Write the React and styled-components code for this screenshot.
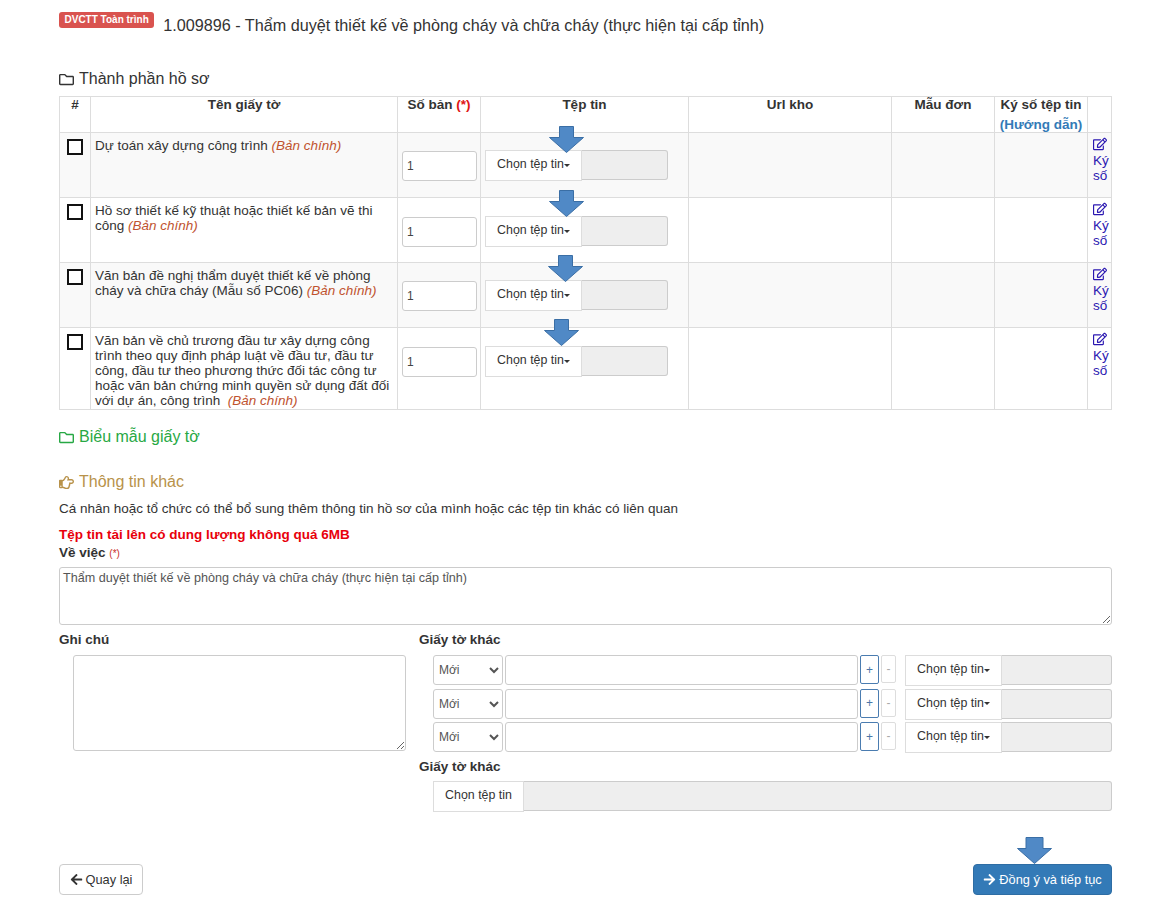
import React from 'react';
import styled, { createGlobalStyle } from 'styled-components';
import { FaRegFolder, FaRegEdit, FaRegHandPointRight, FaArrowLeft, FaArrowRight } from 'react-icons/fa';

const GlobalStyle = createGlobalStyle`
  html, body { margin: 0; padding: 0; background: #fff; }
  body {
    font-family: "Liberation Sans", Arial, sans-serif;
    font-size: 13.5px;
    line-height: 20px;
    color: #333;
  }
  * { box-sizing: border-box; }
`;

const Page = styled.div`
  width: 1176px;
  height: 917px;
  padding: 12px 64px 0 59px;
  overflow: hidden;
`;

const TitleRow = styled.div`
  display: flex;
  align-items: flex-start;
  height: 57px;
`;

const Badge = styled.span`
  background: #d9534f;
  color: #fff;
  font-size: 10px;
  font-weight: bold;
  line-height: 16px;
  height: 16px;
  padding: 0 5.5px;
  border-radius: 3px;
  margin-right: 9px;
`;

const Title = styled.span`
  font-size: 16.2px;
  line-height: 26px;
`;

const SectionTitle = styled.div`
  display: flex;
  align-items: center;
  gap: 5px;
  font-size: 16px;
  line-height: 20px;
  height: 20px;
  color: ${(p) => p.$color || '#333'};
  margin-top: ${(p) => p.$top || 0}px;
  svg { font-size: 15px; }
`;

const Table = styled.table`
  width: 1052px;
  table-layout: fixed;
  border-collapse: collapse;
  margin-top: 7px;
`;

const Th = styled.th`
  border: 1px solid #ddd;
  padding: 0 2px;
  height: 36px;
  font-size: 13.5px;
  line-height: 15px;
  vertical-align: top;
  text-align: center;
  font-weight: bold;
  white-space: nowrap;
`;

const Row = styled.tr`
  background: ${(p) => (p.$odd ? '#f9f9f9' : '#fff')};
  height: ${(p) => p.$height}px;
`;

const Td = styled.td`
  border: 1px solid #ddd;
  padding: 5px 4px 0;
  font-size: 13.5px;
  line-height: 15px;
  vertical-align: top;
  position: relative;
`;

const InputCell = styled(Td)`
  padding: ${(p) => p.$pad}px 4px 0;
`;

const FileCell = styled(Td)`
  padding: ${(p) => p.$pad - 1}px 4px 0;
`;

const CheckCell = styled(Td)`
  padding: 6px 7px 0;
`;

const SignCell = styled(Td)`
  padding: 4px 0 0 5px;
`;

const Check = styled.input.attrs({ type: 'checkbox' })`
  appearance: none;
  display: block;
  width: 16px;
  height: 16px;
  margin: 0;
  background: #fff;
  border: 2px solid #111;
`;

const Required = styled.span`
  color: #e01414;
`;

const Kind = styled.i`
  color: #c0532f;
`;

const Guide = styled.span`
  display: block;
  margin-top: 5px;
  color: #337ab7;
`;

const SignLink = styled.a`
  display: block;
  color: #2a17b1;
  line-height: 15px;
  svg { display: block; font-size: 14px; margin-bottom: 2px; }
`;

const SmallInput = styled.input`
  display: block;
  width: 75px;
  height: 30px;
  padding: 0 4px;
  border: 1px solid #ccc;
  border-radius: 3px;
  background: #fff;
  font: 12px "Liberation Sans", Arial, sans-serif;
  color: #444;
`;

const FileGroup = styled.div`
  display: flex;
  width: ${(p) => p.$width}px;
  height: 30px;
`;

const FileBtn = styled.div`
  flex: none;
  width: ${(p) => p.$width}px;
  height: 31px;
  display: flex;
  align-items: center;
  justify-content: center;
  padding-bottom: 3px;
  background: #fff;
  border: 1px solid #ddd;
  font-size: 12.4px;
  color: #333;
  z-index: 1;
`;

const Caret = styled.span`
  width: 0;
  height: 0;
  margin-top: 2px;
  border-top: 3px solid #333;
  border-left: 3px solid transparent;
  border-right: 3px solid transparent;
`;

const FileFill = styled.div`
  flex: 1;
  background: #eee;
  border: 1px solid #ccc;
  border-left: 0;
  border-radius: 0 3px 3px 0;
`;

const ArrowWrap = styled.svg`
  position: absolute;
  left: ${(p) => p.$left}px;
  top: ${(p) => p.$top}px;
  z-index: 2;
`;

const Intro = styled.div`
  line-height: 20px;
  margin-top: 7px;
`;

const Warning = styled.div`
  color: #e8000b;
  font-weight: bold;
  line-height: 16px;
  margin-top: 8px;
`;

const Label = styled.label`
  display: block;
  font-weight: bold;
  line-height: 20px;
  small { font-weight: normal; font-size: 10px; color: #c9302c; }
`;

const SubjectArea = styled.textarea`
  display: block;
  width: 1053px;
  height: 58px;
  margin-top: 3px;
  padding: 2px 3px;
  border: 1px solid #ccc;
  border-radius: 3px;
  font: 12.6px/16px "Liberation Sans", Arial, sans-serif;
  color: #555;
`;

const Columns = styled.div`
  display: grid;
  grid-template-columns: 360px 693px;
  margin-top: 5px;
`;

const NoteArea = styled.textarea`
  display: block;
  width: 333px;
  height: 96px;
  margin: 5px 0 0 14px;
  border: 1px solid #ccc;
  border-radius: 3px;
`;

const DocList = styled.div`
  display: flex;
  flex-direction: column;
  gap: 3.5px;
  margin: 5px 0 0 14px;
`;

const DocRow = styled.div`
  display: flex;
  align-items: flex-start;
  height: 30px;
`;

const TypeSelect = styled.select`
  width: 70px;
  height: 30px;
  padding: 0 0 0 1px;
  border: 1px solid #ccc;
  border-radius: 3px;
  background: #fff;
  font: 12px "Liberation Sans", Arial, sans-serif;
  color: #555;
`;

const NameInput = styled.input`
  width: 353px;
  height: 30px;
  margin: 0 2px;
  border: 1px solid #ccc;
  border-radius: 3px;
`;

const StepBtn = styled.div`
  flex: none;
  width: ${(p) => (p.$main ? 19 : 15)}px;
  height: ${(p) => (p.$main ? 29 : 28)}px;
  margin-right: 2px;
  display: flex;
  align-items: center;
  justify-content: center;
  font-size: 12px;
  border: 1px solid ${(p) => (p.$main ? '#4a7cb0' : '#ddd')};
  border-radius: 2px;
  color: ${(p) => (p.$main ? '#4a76a8' : '#aaa')};
`;

const FileSlot = styled.div`
  margin-left: 7px;
`;

const SecondLabel = styled(Label)`
  margin-top: 5px;
`;

const LastFile = styled.div`
  margin: 4px 0 0 14px;
`;

const Footer = styled.div`
  display: flex;
  justify-content: space-between;
  align-items: flex-start;
  width: 1053px;
  margin-top: 53px;
`;

const Back = styled.button`
  display: flex;
  align-items: center;
  gap: 3px;
  height: 31px;
  width: 84px;
  justify-content: center;
  background: #fff;
  border: 1px solid #ccc;
  border-radius: 4px;
  font: 12.8px "Liberation Sans", Arial, sans-serif;
  color: #333;
  svg { font-size: 13px; }
`;

const NextWrap = styled.div`
  position: relative;
`;

const Next = styled(Back)`
  width: 139px;
  background: #337ab7;
  border-color: #2e6da4;
  color: #fff;
`;

const Arrow = ({ left, top, shaft = 14 }) => {
  const s = (35 - shaft) / 2;
  return (
    <ArrowWrap $left={left} $top={top} width="35" height="27" viewBox="0 0 35 27">
      <polygon
        points={`${s},0.5 ${35 - s},0.5 ${35 - s},11.5 34.5,11.5 17.5,26.5 0.5,11.5 ${s},11.5`}
        fill="#5089c6"
        stroke="#3a6ea5"
      />
    </ArrowWrap>
  );
};

const ChooseFile = ({ width = 183, btn = 97, caret = true }) => (
  <FileGroup $width={width}>
    <FileBtn $width={btn}>
      Chọn tệp tin{caret && <Caret />}
    </FileBtn>
    <FileFill />
  </FileGroup>
);

const columns = [
  ['#', 31],
  ['Tên giấy tờ', 307],
  [<>Số bản <Required>(*)</Required></>, 83],
  ['Tệp tin', 208],
  ['Url kho', 203],
  ['Mẫu đơn', 103],
  [<>Ký số tệp tin<Guide>(Hướng dẫn)</Guide></>, 93],
  ['', 24],
];

const docs = [
  { name: 'Dự toán xây dựng công trình', h: 65, pad: 18, arrow: [68, -7] },
  { name: 'Hồ sơ thiết kế kỹ thuật hoặc thiết kế bản vẽ thi công', h: 65, pad: 19, arrow: [68, -8] },
  { name: 'Văn bản đề nghị thẩm duyệt thiết kế về phòng cháy và chữa cháy (Mẫu số PC06)', h: 65, pad: 18, arrow: [67, -8] },
  {
    name: 'Văn bản về chủ trương đầu tư xây dựng công trình theo quy định pháp luật về đầu tư, đầu tư công, đầu tư theo phương thức đối tác công tư hoặc văn bản chứng minh quyền sử dụng đất đối với dự án, công trình\u00a0',
    h: 82,
    pad: 19,
    arrow: [63, -9],
  },
];

export default function App() {
  return (
    <Page>
      <GlobalStyle />
      <TitleRow>
        <Badge>DVCTT Toàn trình</Badge>
        <Title>1.009896 - Thẩm duyệt thiết kế về phòng cháy và chữa cháy (thực hiện tại cấp tỉnh)</Title>
      </TitleRow>

      <SectionTitle><FaRegFolder /> Thành phần hồ sơ</SectionTitle>
      <Table>
        <colgroup>
          {columns.map(([, w], i) => <col key={i} width={w} />)}
        </colgroup>
        <thead>
          <tr>
            {columns.map(([title], i) => <Th key={i}>{title}</Th>)}
          </tr>
        </thead>
        <tbody>
          {docs.map((doc, i) => (
            <Row key={i} $odd={i % 2 === 0} $height={doc.h}>
              <CheckCell><Check /></CheckCell>
              <Td>{doc.name} <Kind>(Bản chính)</Kind></Td>
              <InputCell $pad={doc.pad}><SmallInput defaultValue="1" /></InputCell>
              <FileCell $pad={doc.pad}>
                <Arrow left={doc.arrow[0]} top={doc.arrow[1]} />
                <ChooseFile />
              </FileCell>
              <Td />
              <Td />
              <Td />
              <SignCell>
                <SignLink><FaRegEdit />Ký số</SignLink>
              </SignCell>
            </Row>
          ))}
        </tbody>
      </Table>

      <SectionTitle $color="#27a844" $top={17}><FaRegFolder /> Biểu mẫu giấy tờ</SectionTitle>
      <SectionTitle $color="#b8924a" $top={25}><FaRegHandPointRight /> Thông tin khác</SectionTitle>
      <Intro>Cá nhân hoặc tổ chức có thể bổ sung thêm thông tin hồ sơ của mình hoặc các tệp tin khác có liên quan</Intro>
      <Warning>Tệp tin tải lên có dung lượng không quá 6MB</Warning>
      <Label>Về việc <small>(*)</small></Label>
      <SubjectArea defaultValue="Thẩm duyệt thiết kế về phòng cháy và chữa cháy (thực hiện tại cấp tỉnh)" />

      <Columns>
        <div>
          <Label>Ghi chú</Label>
          <NoteArea />
        </div>
        <div>
          <Label>Giấy tờ khác</Label>
          <DocList>
            {[0, 1, 2].map((i) => (
              <DocRow key={i}>
                <TypeSelect defaultValue="Mới"><option>Mới</option></TypeSelect>
                <NameInput />
                <StepBtn $main>+</StepBtn>
                <StepBtn>-</StepBtn>
                <FileSlot><ChooseFile width={207} /></FileSlot>
              </DocRow>
            ))}
          </DocList>
          <SecondLabel>Giấy tờ khác</SecondLabel>
          <LastFile><ChooseFile width={679} btn={91} caret={false} /></LastFile>
        </div>
      </Columns>

      <Footer>
        <Back><FaArrowLeft /> Quay lại</Back>
        <NextWrap>
          <Arrow left={44} top={-27} shaft={17} />
          <Next><FaArrowRight /> Đồng ý và tiếp tục</Next>
        </NextWrap>
      </Footer>
    </Page>
  );
}
